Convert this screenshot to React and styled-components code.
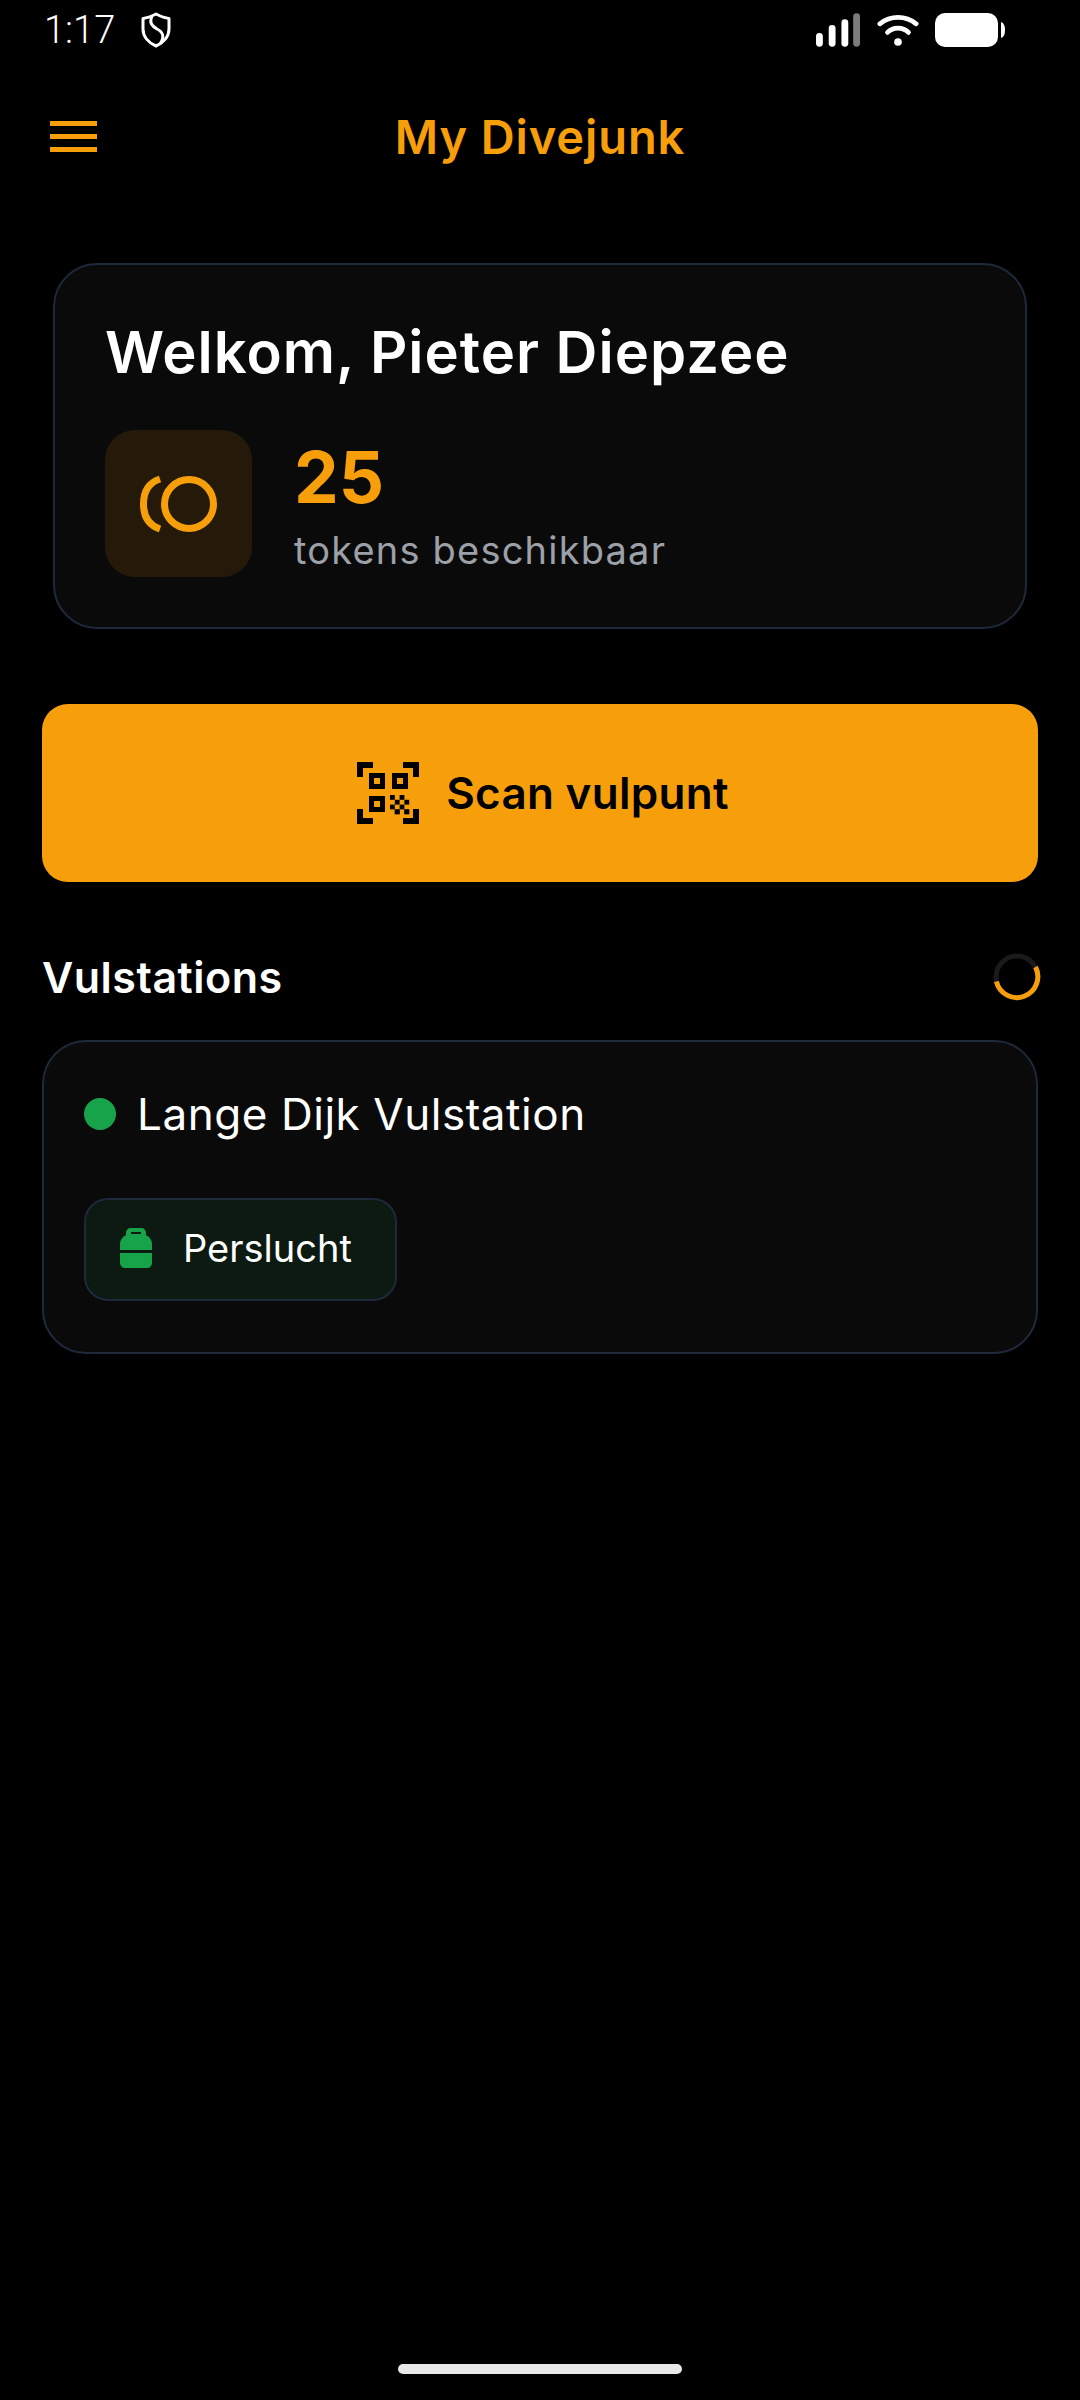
import styled, { createGlobalStyle } from "styled-components";

const GlobalStyle = createGlobalStyle`
  html, body {
    margin: 0;
    padding: 0;
    background: #000;
  }
  * {
    box-sizing: border-box;
  }
`;

const AMBER = "#f79f0a";
const GREEN = "#16a34a";

const CHECKER_CELLS = [0, 1, 2, 3].flatMap((row) =>
  [0, 1, 2, 3].filter((col) => (row + col) % 2 === 0).map((col) => [col, row]),
);

const ShieldIcon = () => (
  <svg width="30" height="36" viewBox="0 0 30 36" fill="none" stroke="#fff" strokeWidth="3">
    <path d="M15 2 C19 4 24 6 28 6.5 V17 C28 25 22 31 15 34 C8 31 2 25 2 17 V6.5 C6 6 11 4 15 2 Z" strokeLinejoin="round" />
    <path d="M11 4 C8 11 11 14 16 17 C22 20 24 25 19 32" />
  </svg>
);

const SignalIcon = () => (
  <svg width="45" height="34" viewBox="0 0 46 34" fill="#fff">
    <rect x="0" y="20" width="7" height="14" rx="3.5" />
    <rect x="13" y="12" width="7" height="22" rx="3.5" />
    <rect x="26" y="6" width="7" height="28" rx="3.5" />
    <rect x="38" y="0" width="7" height="34" rx="3.5" fill="#7c7c7c" />
  </svg>
);

const WifiIcon = () => (
  <svg width="42" height="33" viewBox="0 0 44 34" fill="none" stroke="#fff" strokeWidth="5" strokeLinecap="round">
    <path d="M3 10 C14 1 30 1 41 10" />
    <path d="M11 19 C17 13 27 13 33 19" />
    <circle cx="22" cy="29" r="4" fill="#fff" stroke="none" />
  </svg>
);

const BatteryIcon = () => (
  <svg width="70" height="34" viewBox="0 0 70 34" fill="#fff">
    <rect x="0" y="0" width="63" height="34" rx="10" />
    <path d="M66 9 C69 10 70 13 70 17 C70 21 69 24 66 25 Z" />
  </svg>
);

const CoinsIcon = () => (
  <svg width="78" height="58" viewBox="0 0 78 58" fill="none" stroke={AMBER} strokeWidth="7">
    <circle cx="49" cy="29" r="24.5" />
    <path d="M20 4 C8 8 3.5 18 3.5 29 C3.5 40 8 50 20 54" />
  </svg>
);

const QrIcon = () => (
  <svg width="62" height="62" viewBox="0 0 62 62" fill="#000">
    <path d="M0 0H16V6H6V15H0Z" />
    <path d="M62 0H46V6H56V15H62Z" />
    <path d="M0 62H16V56H6V47H0Z" />
    <path d="M62 62H46V56H56V47H62Z" />
    <path fillRule="evenodd" d="M12 11H28V27H12ZM17 16V22H23V16Z" />
    <path fillRule="evenodd" d="M35 11H51V27H35ZM40 16V22H46V16Z" />
    <path fillRule="evenodd" d="M12 34H28V50H12ZM17 39V45H23V39Z" />
    {CHECKER_CELLS.map(([col, row]) => (
      <rect key={`${col}-${row}`} x={33 + col * 4.8} y={33 + row * 4.8} width="4.8" height="4.8" />
    ))}
    <rect x="37.8" y="47.4" width="4.8" height="4.8" />
    <rect x="47.4" y="47.4" width="4.8" height="4.8" />
  </svg>
);

const TankIcon = () => (
  <svg width="32" height="40" viewBox="0 0 32 40" fill={GREEN}>
    <path
      fillRule="evenodd"
      d="M11 0H21C24 0 26 2 26 5V9H6V5C6 2 8 0 11 0ZM11 4V8H21V4Z"
    />
    <path d="M10 6H22C28 7 32 11 32 16V22H0V16C0 11 4 7 10 6Z" />
    <path d="M0 25H32V34C32 38 30 40 26 40H6C2 40 0 38 0 34Z" />
  </svg>
);

const Spinner = () => (
  <svg width="48" height="48" viewBox="0 0 48 48" fill="none" strokeWidth="5">
    <circle cx="24" cy="24" r="21" stroke="#1a1a1a" />
    <path d="M42.5 14 A21 21 0 1 1 3.4 28.5" stroke={AMBER} />
  </svg>
);

const App = () => {
  return (
    <Page>
      <GlobalStyle />
      <StatusBar>
        <StatusLeft>
          <Clock>1:17</Clock>
          <ShieldIcon />
        </StatusLeft>
        <StatusRight>
          <SignalIcon />
          <WifiIcon />
          <BatteryIcon />
        </StatusRight>
      </StatusBar>

      <Header>
        <MenuButton>
          <MenuLine />
          <MenuLine />
          <MenuLine />
        </MenuButton>
        <HeaderTitle>My Divejunk</HeaderTitle>
      </Header>

      <WelcomeCard>
        <WelcomeTitle>Welkom, Pieter Diepzee</WelcomeTitle>
        <TokenRow>
          <TokenIcon>
            <CoinsIcon />
          </TokenIcon>
          <TokenText>
            <TokenCount>25</TokenCount>
            <TokenLabel>tokens beschikbaar</TokenLabel>
          </TokenText>
        </TokenRow>
      </WelcomeCard>

      <ScanButton>
        <QrIcon />
        Scan vulpunt
      </ScanButton>

      <SectionHeader>
        <SectionTitle>Vulstations</SectionTitle>
        <Spinner />
      </SectionHeader>

      <StationCard>
        <StationHead>
          <StatusDot />
          <StationName>Lange Dijk Vulstation</StationName>
        </StationHead>
        <GasChip>
          <TankIcon />
          <GasLabel>Perslucht</GasLabel>
        </GasChip>
      </StationCard>

      <HomeBar />
    </Page>
  );
};

const Page = styled.div`
  display: flex;
  flex-direction: column;
  width: 1080px;
  height: 2400px;
  background: #000;
  color: #fff;
  font-family: Inter, "Liberation Sans", sans-serif;
  overflow: hidden;
`;

const StatusBar = styled.div`
  display: flex;
  justify-content: space-between;
  align-items: center;
  height: 60px;
  padding: 0 75px 0 44px;
`;

const StatusLeft = styled.div`
  display: flex;
  align-items: center;
  gap: 26px;
`;

const StatusRight = styled.div`
  display: flex;
  align-items: center;
  gap: 16px;
`;

const Clock = styled.span`
  font-family: Roboto, sans-serif;
  font-size: 38px;
  font-weight: 300;
  line-height: 1;
`;

const Header = styled.header`
  position: relative;
  display: flex;
  justify-content: center;
  align-items: center;
  height: 154px;
`;

const MenuButton = styled.div`
  position: absolute;
  left: 50px;
  top: 61px;
  display: flex;
  flex-direction: column;
  gap: 8px;
  width: 47px;
`;

const MenuLine = styled.span`
  display: block;
  height: 5px;
  background: ${AMBER};
`;

const HeaderTitle = styled.h1`
  margin: 0 0 2px;
  color: ${AMBER};
  font-size: 47px;
  font-weight: 600;
  line-height: 1;
  letter-spacing: 0.9px;
`;

const WelcomeCard = styled.section`
  display: flex;
  flex-direction: column;
  height: 366px;
  margin: 49px 53px 0;
  padding: 54px 50px 0;
  background: #0a0a0a;
  border: 2px solid #1e293b;
  border-radius: 44px;
`;

const WelcomeTitle = styled.h2`
  margin: 0;
  font-size: 58px;
  font-weight: 600;
  line-height: 66px;
  letter-spacing: 1px;
`;

const TokenRow = styled.div`
  display: flex;
  align-items: center;
  gap: 42px;
  margin-top: 45px;
`;

const TokenIcon = styled.div`
  display: flex;
  justify-content: center;
  align-items: center;
  width: 147px;
  height: 147px;
  background: #251a0a;
  border-radius: 30px;
`;

const TokenText = styled.div`
  display: flex;
  flex-direction: column;
  margin-top: 3px;
`;

const TokenCount = styled.span`
  color: ${AMBER};
  font-size: 71px;
  font-weight: 700;
  line-height: 80px;
`;

const TokenLabel = styled.span`
  margin-top: 9px;
  color: #9ca0a8;
  font-size: 38px;
  line-height: 48px;
  letter-spacing: 1.2px;
`;

const ScanButton = styled.button`
  display: flex;
  justify-content: center;
  align-items: center;
  gap: 27px;
  height: 178px;
  margin: 75px 42px 0;
  padding: 0 0 0 6px;
  background: ${AMBER};
  border: none;
  border-radius: 26px;
  color: #000;
  font-family: inherit;
  font-size: 44px;
  font-weight: 600;
  letter-spacing: 0.3px;
`;

const SectionHeader = styled.div`
  display: flex;
  justify-content: space-between;
  align-items: center;
  height: 52px;
  margin: 69px 39px 0 42px;
`;

const SectionTitle = styled.h3`
  margin: 0;
  font-size: 43px;
  font-weight: 600;
  line-height: 1;
  letter-spacing: 0.5px;
`;

const StationCard = styled.section`
  display: flex;
  flex-direction: column;
  align-items: flex-start;
  height: 314px;
  margin: 37px 42px 0;
  padding: 0 40px;
  background: #0a0a0a;
  border: 2px solid #1e293b;
  border-radius: 44px;
`;

const StationHead = styled.div`
  display: flex;
  align-items: center;
  gap: 21px;
  height: 70px;
  margin-top: 37px;
`;

const StatusDot = styled.span`
  width: 32px;
  height: 32px;
  background: ${GREEN};
  border-radius: 50%;
`;

const StationName = styled.span`
  font-size: 44px;
  line-height: 1;
  letter-spacing: 0.55px;
`;

const GasChip = styled.div`
  display: flex;
  align-items: center;
  gap: 31px;
  width: 313px;
  height: 103px;
  margin-top: 49px;
  padding: 0 0 3px 34px;
  background: #0c1a11;
  border: 2px solid #1e293b;
  border-radius: 24px;
`;

const GasLabel = styled.span`
  font-size: 38px;
  line-height: 1;
`;

const HomeBar = styled.div`
  width: 284px;
  height: 10px;
  margin: auto auto 26px;
  background: #e8e8e8;
  border-radius: 5px;
`;

export default App;
